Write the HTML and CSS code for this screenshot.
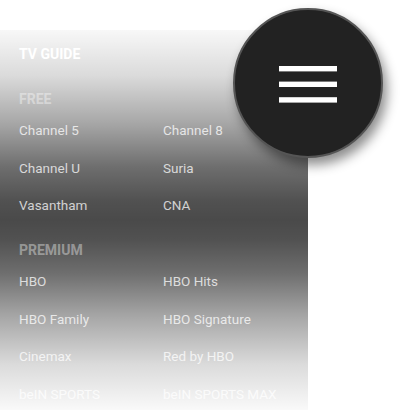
FILE: index.html
```html
<!DOCTYPE html>
<html>
<head>
<meta charset="utf-8">
<link rel="stylesheet" href="styles.css">
</head>
<body>
<div class="panel">
  <h1 class="title">TV GUIDE</h1>
  <h2 class="section-head first">FREE</h2>
  <ul class="grid">
    <li>Channel 5</li><li>Channel 8</li>
    <li>Channel U</li><li>Suria</li>
    <li>Vasantham</li><li>CNA</li>
  </ul>
  <h2 class="section-head">PREMIUM</h2>
  <ul class="grid">
    <li>HBO</li><li>HBO Hits</li>
    <li>HBO Family</li><li>HBO Signature</li>
    <li>Cinemax</li><li>Red by HBO</li>
    <li>beIN SPORTS</li><li>beIN SPORTS MAX</li>
  </ul>
  <div class="fade"></div>
</div>
<button class="fab" aria-label="Menu">
  <svg width="58" height="37" viewBox="0 0 58 37"><rect x="0" y="0" width="58" height="5.4" fill="#fff"/><rect x="0" y="15.6" width="58" height="5.4" fill="#fff"/><rect x="0" y="31.2" width="58" height="5.4" fill="#fff"/></svg>
</button>
</body>
</html>
```
FILE: styles.css
```css
html, body {
  margin: 0;
  padding: 0;
  background: #fff;
  font-family: Roboto, "Liberation Sans", sans-serif;
}
.panel {
  position: relative;
  width: 308px;
  height: 380px;
  margin-top: 30px;
  box-sizing: border-box;
  padding: 14px 0 0 19px;
  background: #4a4a4a;
  overflow: hidden;
}
.title {
  margin: 0;
  font-size: 14px;
  font-weight: 700;
  line-height: 20px;
  color: #fff;
}
.section-head {
  margin: 15.5px 0 0;
  font-size: 14px;
  font-weight: 700;
  line-height: 20px;
  color: rgba(255,255,255,0.4);
}
.section-head.first {
  margin-top: 25px;
}
.grid {
  list-style: none;
  margin: 3px 0 0;
  padding: 0;
  display: grid;
  grid-template-columns: 144px 144px;
  grid-auto-rows: 37.5px;
  font-size: 13.5px;
  line-height: 37.5px;
  color: rgba(255,255,255,0.75);
  white-space: nowrap;
}
.fade {
  position: absolute;
  inset: 0;
  background: linear-gradient(
    rgba(255,255,255,0.96) 0%,
    rgba(255,255,255,0.8) 12%,
    rgba(255,255,255,0.5) 25%,
    rgba(255,255,255,0.2) 36%,
    rgba(255,255,255,0.04) 45%,
    rgba(255,255,255,0) 50%,
    rgba(255,255,255,0.04) 55%,
    rgba(255,255,255,0.2) 64%,
    rgba(255,255,255,0.5) 75%,
    rgba(255,255,255,0.8) 88%,
    rgba(255,255,255,0.97) 100%);
  pointer-events: none;
}
.fab {
  position: absolute;
  left: 233px;
  top: 8px;
  width: 150px;
  height: 150px;
  box-sizing: border-box;
  border-radius: 50%;
  border: 2px solid #555;
  background: #222;
  box-shadow: 4px 7px 12px rgba(0,0,0,0.45);
  padding: 0;
  display: flex;
  align-items: center;
  justify-content: center;
}
.fab svg {
  display: block;
  margin-top: 2px;
}
```
